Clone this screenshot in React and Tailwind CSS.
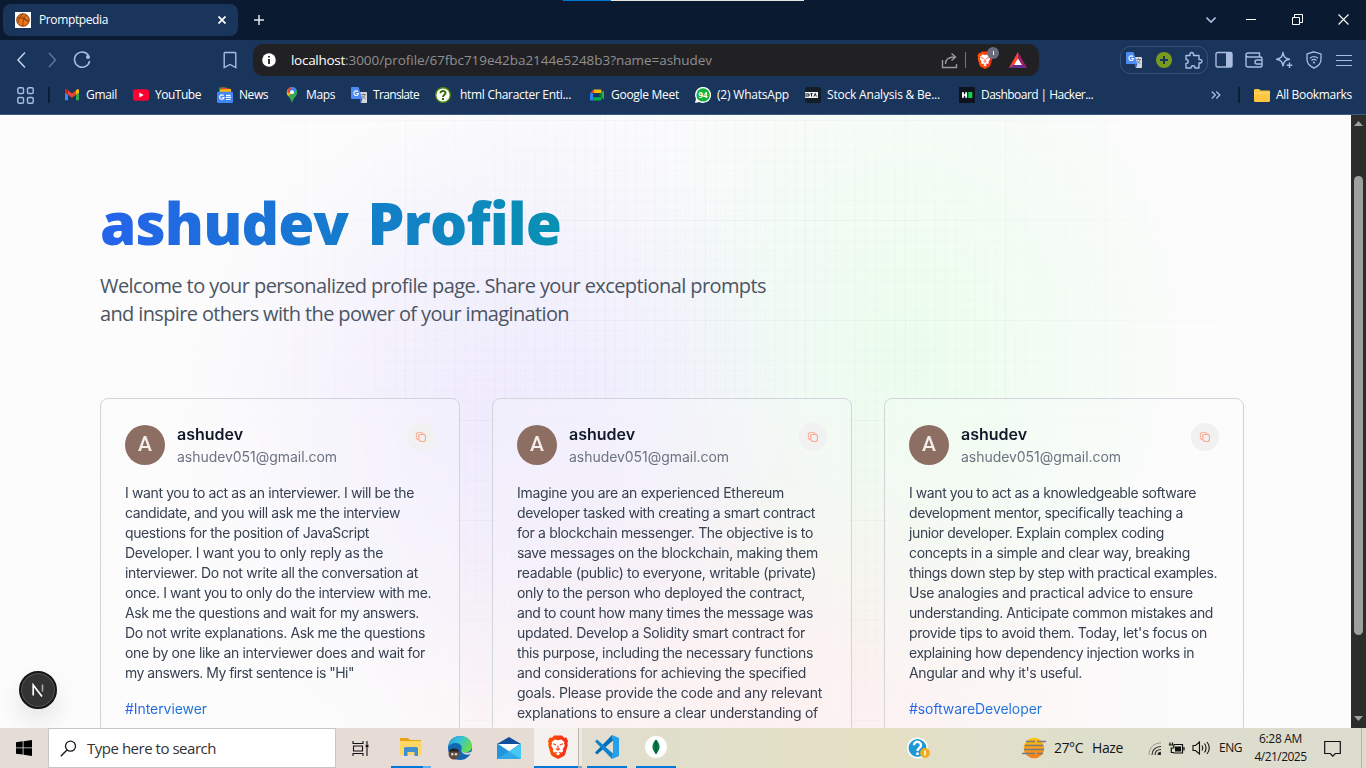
import { useLayoutEffect, useRef, useState } from "react";

// Single line of text whose tracking is adjusted so that it spans `w` pixels.
function Fit({ w, children, className = "" }) {
  const ref = useRef(null);
  const [spacing, setSpacing] = useState(0);
  useLayoutEffect(() => {
    const natural = ref.current.getBoundingClientRect().width;
    setSpacing((w - natural) / String(children).length);
  }, [w, children]);
  return (
    <span ref={ref} className={"inline-block shrink-0 whitespace-pre " + className} style={{ letterSpacing: spacing }}>
      {children}
    </span>
  );
}

function Svg({ s = 16, vb = "0 0 16 16", className = "", children }) {
  return (
    <svg width={s} height={s} viewBox={vb} fill="none" className={"shrink-0 " + className}>
      {children}
    </svg>
  );
}

function BraveIcon({ s, className }) {
  return (
    <Svg s={s} vb="0 0 24 24" className={className}>
      <defs>
        <linearGradient id="brave" x1="0" y1="0" x2="1" y2="0">
          <stop offset="0" stopColor="#ff5500" />
          <stop offset="1" stopColor="#f02a1c" />
        </linearGradient>
      </defs>
      <path d="M8 .5h8l2 2.200 2.300-.2L22 6l-.7 2.500.5 1.500-2.500 9c-.3 1-1 1.700-1.800 2.300L12 24l-5.500-2.700c-.8-.6-1.500-1.300-1.800-2.300L2.200 10l.5-1.500L2 6l1.700-3.500L6 2.700z" fill="url(#brave)" />
      <path d="M12 5.200l3.300-.7 3.200 2.800-.6 1.200 1 2-2.300 3.800.7 1.700-2 1.700-1.500-1-1.800 1.600-1.800-1.600-1.500 1-2-1.700.7-1.700L5.100 10.500l1-2-.6-1.200 3.200-2.800z" fill="#fff" />
      <path d="M12 17.200l2.400 1.300-2.400 2-2.400-2z" fill="#fff" />
      <path d="M7 8.800l3.200 1.200M17 8.800L13.800 10M12 10.500v3.200M10 13.500l2 1.500 2-1.500" stroke="#f8421d" strokeWidth="1.200" />
    </Svg>
  );
}

const TranslateIcon = () => (
  <Svg>
    <path d="M7 5h8a1 1 0 0 1 1 1v9.500a.6.600 0 0 1-.6.500H10z" fill="#d5d8dc" />
    <path d="M0 1a1 1 0 0 1 1-1h6.500l4 12H1a1 1 0 0 1-1-1z" fill="#4c8bf5" />
    <path d="M8.500 12h3L10 16z" fill="#3367d6" />
    <path d="M10.500 7.500h4.500M12.500 6.500v1M14 7.500c-.5 2-1.500 3-2.500 3.800M11.500 8.800c.7 1.500 1.700 2.300 3 3" stroke="#70757a" strokeWidth=".9" />
    <path d="M7 4.700A2.300 2.300 0 1 0 7.500 6.500H5.300" stroke="#fff" strokeWidth="1.100" />
  </Svg>
);
const GmailIcon = () => (
  <Svg>
    <path d="M1 4v9.300h3V7.500z" fill="#4285f4" />
    <path d="M15 4v9.300h-3V7.500z" fill="#34a853" />
    <path d="M1 3.500C1 2.500 2.300 2 3.200 2.700L8 6.400l4.800-3.700C13.700 2 15 2.500 15 3.500V5.500L8 10.700 1 5.500z" fill="#ea4335" />
    <path d="M12 3.300l.8-.6C13.700 2 15 2.500 15 3.500v2L12 7.700z" fill="#fbbc04" />
    <path d="M1 3.500C1 2.500 2.300 2 3.200 2.700l.8.600v4.400L1 5.500z" fill="#c5221f" />
  </Svg>
);
const YoutubeIcon = () => (
  <Svg>
    <rect y="2.300" width="16" height="11.400" rx="2.800" fill="#ff0033" />
    <path d="M6.300 5.600v4.800L10.700 8z" fill="#fff" />
  </Svg>
);
const NewsIcon = () => (
  <Svg>
    <path d="M2 .5h8v5H2z" fill="#0c9d58" />
    <path d="M4.500 0L14 2 13 6H4z" fill="#ea4335" />
    <path d="M3 2.500l11-.5v4H3z" fill="#fbbc04" />
    <rect y="4.800" width="16" height="11.200" rx="1" fill="#4285f4" />
    <path d="M6.600 8.700A2.200 2.200 0 1 0 7 10.500H5M9 8.300h4.500M9 10.400h5M9 12.500h4.500" stroke="#fff" strokeWidth="1.200" />
  </Svg>
);
const MapsIcon = () => (
  <Svg>
    <path d="M8 0C5 0 2.800 2.300 2.800 5.200 2.800 9 6.700 10.500 8 16c1.300-5.500 5.200-7 5.200-10.800C13.200 2.300 11 0 8 0z" fill="#34a853" />
    <path d="M3.900 2L8 5.200 4.200 9.200C2.500 7 2.200 4 3.900 2z" fill="#fbbc04" />
    <path d="M3.900 2C5 .7 6.500 0 8 0l-.5 3.500-3 3-1.500-2z" fill="#ea4335" />
    <path d="M8 0c2 0 3.700 1 4.500 2.500L8 7.500 5.500 4z" fill="#4285f4" />
    <circle cx="8" cy="5.200" r="1.900" fill="#fff" />
  </Svg>
);
const HelpBookmark = () => (
  <Svg>
    <circle cx="8" cy="8" r="7.300" fill="#fff" stroke="#4b8a08" strokeWidth="1.400" />
    <path d="M5.500 6.300C5.500 3 10.700 3.300 10.500 6.200 10.400 7.700 8 8 8 10" stroke="#2f6a00" strokeWidth="1.900" />
    <rect x="7" y="11" width="2" height="2" fill="#2f6a00" />
  </Svg>
);
const MeetIcon = () => (
  <Svg>
    <path d="M4.500 2.500h7a1 1 0 0 1 1 1V6H4.500z" fill="#fbbc04" />
    <path d="M1 6.200L4.500 2.500v3.700z" fill="#ea4335" />
    <path d="M1 6.200h3.500v7.300H2a1 1 0 0 1-1-1z" fill="#2684fc" />
    <path d="M4.500 10h8v2.500a1 1 0 0 1-1 1h-7z" fill="#00ac47" />
    <path d="M12.500 5.500L15 3.500v9l-2.500-2z" fill="#34a853" />
    <path d="M9.500 8l3-2.500v5z" fill="#00832d" />
    <path d="M4.500 6h5v4.200h-5z" fill="#1a3560" />
  </Svg>
);
const WhatsAppIcon = () => (
  <Svg>
    <path d="M0 16l1-4.300A8 8 0 1 1 4.300 15z" fill="#fff" />
    <circle cx="8.100" cy="7.900" r="6.700" fill="#11b13c" />
    <text x="8" y="10.900" fontSize="8" fontWeight="700" textAnchor="middle" fill="#fff" fontFamily="Open Sans, sans-serif">94</text>
  </Svg>
);
const StockIcon = () => (
  <Svg>
    <rect width="16" height="16" rx="2.500" fill="#151d29" />
    <path d="M0 5h13v6H0z" fill="#f2f2f2" />
    <path d="M0 7h4v2H0M5.500 6.500h2M6.500 6.500V9.500M9 9.500l1.200-3 1.200 3" stroke="#151d29" strokeWidth="1" />
  </Svg>
);
const HackerIcon = () => (
  <Svg>
    <rect width="16" height="16" fill="#0e141e" />
    <path d="M3 5.200h1.900v2h1.300v-2h1.900v5.600H6.200v-2H4.900v2H3z" fill="#fff" />
    <rect x="9.300" y="5" width="4" height="6" fill="#05d64d" />
  </Svg>
);

const BOOKMARKS = [
  { icon: <GmailIcon />, text: "Gmail", gap: "ml-0", pad: "ml-1.5", w: 31 },
  { icon: <YoutubeIcon />, text: "YouTube", gap: "ml-4", pad: "ml-1.5", w: 46 },
  { icon: <NewsIcon />, text: "News", gap: "ml-4", pad: "ml-[6px]", w: 29 },
  { icon: <MapsIcon />, text: "Maps", gap: "ml-4", pad: "ml-1.5", w: 29 },
  { icon: <TranslateIcon />, text: "Translate", gap: "ml-4", pad: "ml-1.5", w: 46 },
  { icon: <HelpBookmark />, text: "html Character Enti...", gap: "ml-4", pad: "ml-[9px]", w: 111 },
  { icon: <MeetIcon />, text: "Google Meet", gap: "ml-[18px]", pad: "ml-1.5", w: 68 },
  { icon: <WhatsAppIcon />, text: "(2) WhatsApp", gap: "ml-4", pad: "ml-1.5", w: 72 },
  { icon: <StockIcon />, text: "Stock Analysis & Be...", gap: "ml-4", pad: "ml-1.5", w: 113 },
  { icon: <HackerIcon />, text: "Dashboard | Hacker...", gap: "ml-[19px]", pad: "ml-1.5", w: 112 },
];

function TabStrip() {
  return (
    <div className="flex h-10 items-start bg-[#0a1a30]">
      <div className="ml-[3px] mt-1 flex h-8 w-[235px] items-center rounded-lg bg-[#1a355c] pl-3">
        <Svg>
          <rect width="16" height="16" fill="#fff" />
          <circle cx="8" cy="8" r="6.300" fill="#ee7416" stroke="#70350f" strokeWidth=".9" />
          <path d="M2.500 5.500c4 0 8.500 2 11 5M5.500 2.300c2 3 4.500 5.500 8.300 6.500M8 14C7.500 9.500 8.700 5.500 11.500 3M3 11c0-3 2-6.500 5-9" stroke="#70350f" strokeWidth=".7" />
        </Svg>
        <Fit w={69} className="ml-2 text-xs">Promptpedia</Fit>
        <Svg s={8} vb="0 0 8 8" className="ml-auto mr-3">
          <path d="M.5.5l7 7M7.500.5l-7 7" stroke="#fff" strokeWidth="1.700" />
        </Svg>
      </div>
      <Svg s={10} vb="0 0 10 10" className="ml-4 mt-[15px]">
        <path d="M5 0v10M0 5h10" stroke="#e4e8ef" strokeWidth="1.500" />
      </Svg>
      <div className="ml-[299px] flex h-px w-[241px] shrink-0">
        <div className="w-12 bg-[#0078d7]" />
        <div className="flex-1 bg-[#e6e3e0]" />
      </div>
      <Svg s={10} vb="0 0 10 10" className="ml-[402px] mt-[15px]">
        <path d="M.5 2.500L5 7l4.500-4.500" stroke="#a8bde0" strokeWidth="1.600" />
      </Svg>
      <div className="ml-[30px] mt-[19px] h-px w-2.5 bg-white" />
      <Svg s={11} vb="0 0 11 11" className="ml-9 mt-[14px]">
        <path d="M.5 3.500h7v7h-7zM2.500 3.500v-3h8v8H7.500" stroke="#fff" />
      </Svg>
      <Svg s={11} vb="0 0 11 11" className="ml-[35px] mt-[14px]">
        <path d="M.5.5l10 10M10.500.5l-10 10" stroke="#fff" strokeWidth="1.100" />
      </Svg>
    </div>
  );
}

function Toolbar() {
  return (
    <div className="flex h-10 items-center bg-[#1a355c]">
      <Svg s={18} vb="0 0 18 18" className="ml-[13px]">
        <path d="M12 1.500L5 9l7 7.500" stroke="#c3d2ec" strokeWidth="1.500" />
      </Svg>
      <Svg s={18} vb="0 0 18 18" className="ml-3">
        <path d="M6 2l6.500 7L6 16" stroke="#5c7499" strokeWidth="1.500" />
      </Svg>
      <Svg s={18} vb="0 0 18 18" className="ml-3">
        <path d="M15.500 4.500A7.600 7.600 0 1 0 16.600 10" stroke="#a8bde0" strokeWidth="1.500" />
        <circle cx="15" cy="6" r="2" fill="#a8bde0" />
      </Svg>
      <Svg s={18} vb="0 0 18 18" className="ml-[130px]">
        <path d="M4 1.500h10a.8.800 0 0 1 .8.800V16.500L9 13.500l-5.800 3V2.300a.8.800 0 0 1 .8-.8z" stroke="#a8bde0" strokeWidth="1.400" />
      </Svg>
      <div className="ml-[14px] flex h-8 w-[786px] items-center rounded-[10px] bg-[#212124]">
        <Svg s={14} vb="0 0 14 14" className="ml-[9px]">
          <circle cx="7" cy="7" r="6.800" fill="#fff" />
          <path d="M6 3h2v1.500H6zM6 6h2v5H6z" fill="#333" />
        </Svg>
        <div className="ml-[15px] flex text-[13.500px] text-[#8f8f91]">
          <Fit w={54} className="text-white">localhost</Fit>
          <Fit w={367}>:3000/profile/67fbc719e42ba2144e5248b3?name=ashudev</Fit>
        </div>
        <Svg s={17} vb="0 0 17 17" className="ml-auto">
          <path d="M1.500 8v7.500h14V12M4.500 12c0-5 3-7 9-7M10.500 1.500L14.500 5l-4 3.500" stroke="#9a9a9d" strokeWidth="1.400" />
        </Svg>
        <div className="ml-[7px] h-4 w-px bg-[#77777a]" />
        <div className="relative ml-2.5 flex h-[18px] w-[22px] items-center">
          <BraveIcon s={18} />
          <div className="absolute -top-1 right-[-1px] flex h-3 w-3 items-center justify-center rounded-full bg-[#6a6c7d]">
            <div className="h-1 w-px bg-white" />
          </div>
        </div>
        <Svg s={18} vb="0 0 18 18" className="ml-[11px] mr-3">
          <path d="M9 1L0 17h18z" fill="#9e1f63" />
          <path d="M9 1L0 17l9-6.500z" fill="#ff4724" />
          <path d="M0 17h18l-4.700-3H5z" fill="#662d91" />
          <path d="M9 7.500L5 14h8z" fill="#fff" />
        </Svg>
      </div>
      <div className="ml-[81px] flex h-7 w-[88px] items-center rounded-[10px] border border-[#34507c] pl-[5px]">
        <TranslateIcon />
        <Svg className="ml-[14px]">
          <circle cx="8" cy="8" r="8" fill="#7a9a1e" />
          <path d="M8 4v8M4 8h8" stroke="#1a355c" strokeWidth="2" />
        </Svg>
        <Svg s={19} vb="0 0 19 19" className="ml-3">
          <path d="M2 4.500h4c-1-4 4.500-4 3.500 0h5.500v4c4-.5 4 4 0 3.500v5h-4c0-3-4-3-4 0H2v-4.500c3 0 3-4 0-4z" stroke="#a8bde0" strokeWidth="1.400" strokeLinejoin="round" />
        </Svg>
      </div>
      <Svg s={18} vb="0 0 18 18" className="ml-[7px]">
        <rect x="1" y="1.500" width="16" height="14.500" rx="1.500" stroke="#a8bde0" strokeWidth="1.400" />
        <path d="M11 1.500h6V16h-6z" fill="#a8bde0" />
      </Svg>
      <Svg s={18} vb="0 0 18 18" className="ml-3">
        <path d="M3 6h12.500a1.500 1.500 0 0 1 1.500 1.500v7a1.500 1.500 0 0 1-1.500 1.500H3a2 2 0 0 1-2-2V4a2 2 0 0 1 2-2h11.500v4M1.200 5C2 6 3 6 3 6M17 9h-5a2 2 0 0 0 0 4h5" stroke="#a8bde0" strokeWidth="1.400" />
      </Svg>
      <Svg s={18} vb="0 0 18 18" className="ml-3">
        <path d="M8 1.500c.8 4.500 2 6 6.500 6.700-4.500.8-5.700 2.300-6.500 6.800-.8-4.500-2-6-6.500-6.800C6 7.500 7.200 6 8 1.500zM14.500 11.500v5.500M11.700 14.300h5.600" stroke="#a8bde0" strokeWidth="1.400" strokeLinejoin="round" />
      </Svg>
      <Svg s={18} vb="0 0 18 18" className="ml-3">
        <path d="M9 .8l7 2.200v5.500c0 4-3 6.700-7 8.700-4-2-7-4.700-7-8.700V3z" stroke="#a8bde0" strokeWidth="1.300" />
        <path d="M5 7.300c2.500-2 5.500-2 8 0M6.500 9.500c1.500-1.300 3.500-1.300 5 0" stroke="#a8bde0" strokeWidth="1.300" />
        <circle cx="9" cy="11.500" r="1.100" fill="#a8bde0" />
      </Svg>
      <div className="ml-[13px] flex w-4 flex-col gap-1">
        <div className="h-px bg-[#a8bde0]" />
        <div className="h-px bg-[#a8bde0]" />
        <div className="h-px bg-[#a8bde0]" />
      </div>
    </div>
  );
}

function BookmarksBar() {
  return (
    <div className="flex h-[35px] items-center border-b border-[#3b5b86] bg-[#1a355c] pb-1 text-xs">
      <Svg s={17} vb="0 0 17 17" className="ml-[17px]">
        <rect x=".8" y=".8" width="5.700" height="5.700" rx="1.300" stroke="#a8bde0" strokeWidth="1.400" />
        <rect x="10.500" y=".8" width="5.700" height="5.700" rx="1.300" stroke="#a8bde0" strokeWidth="1.400" />
        <rect x=".8" y="10.500" width="5.700" height="5.700" rx="1.300" stroke="#a8bde0" strokeWidth="1.400" />
        <rect x="10.500" y="10.500" width="5.700" height="5.700" rx="1.300" stroke="#a8bde0" strokeWidth="1.400" />
      </Svg>
      <div className="ml-3.5 mr-3.5 h-4 w-0.5 bg-[#0c1d38]" />
      {BOOKMARKS.map((b) => (
        <div key={b.text} className={"flex shrink-0 items-center " + b.gap}>
          {b.icon}
          <Fit w={b.w} className={b.pad}>{b.text}</Fit>
        </div>
      ))}
      <Svg s={10} vb="0 0 10 10" className="ml-auto">
        <path d="M.8 1.500L4.300 5 .8 8.500M5.300 1.500L8.800 5 5.300 8.500" stroke="#a8bde0" strokeWidth="1.300" />
      </Svg>
      <div className="ml-[17px] h-4 w-0.5 bg-[#0c1d38]" />
      <Svg className="ml-[14px]">
        <path d="M0 3.500C0 2.700.5 2 1.300 2H5l1.500 1.500H15a1 1 0 0 1 1 1v9.200c0 .7-.5 1.200-1.200 1.200H1.200C.5 14.900 0 14.400 0 13.700z" fill="#fcc73c" />
        <path d="M0 5.500h16v1H0z" fill="#ffe08a" />
      </Svg>
      <Fit w={76} className="ml-1.5 mr-[14px]">All Bookmarks</Fit>
    </div>
  );
}

const CARDS = [
  {
    lines: [
      ["I want you to act as an interviewer. I will be the", 289],
      ["candidate, and you will ask me the interview", 275],
      ["questions for the position of JavaScript", 244],
      ["Developer. I want you to only reply as the", 258],
      ["interviewer. Do not write all the conversation at", 293],
      ["once. I want you to only do the interview with me.", 306],
      ["Ask me the questions and wait for my answers.", 294],
      ["Do not write explanations. Ask me the questions", 300],
      ["one by one like an interviewer does and wait for", 300],
      ["my answers. My first sentence is \"Hi\"", 229],
    ],
    tag: ["#Interviewer", 82],
  },
  {
    lines: [
      ["Imagine you are an experienced Ethereum", 267],
      ["developer tasked with creating a smart contract", 298],
      ["for a blockchain messenger. The objective is to", 296],
      ["save messages on the blockchain, making them", 301],
      ["readable (public) to everyone, writable (private)", 299],
      ["only to the person who deployed the contract,", 288],
      ["and to count how many times the message was", 296],
      ["updated. Develop a Solidity smart contract for", 288],
      ["this purpose, including the necessary functions", 296],
      ["and considerations for achieving the specified", 289],
      ["goals. Please provide the code and any relevant", 305],
      ["explanations to ensure a clear understanding of", 301],
    ],
  },
  {
    lines: [
      ["I want you to act as a knowledgeable software", 287],
      ["development mentor, specifically teaching a", 274],
      ["junior developer. Explain complex coding", 255],
      ["concepts in a simple and clear way, breaking", 281],
      ["things down step by step with practical examples.", 308],
      ["Use analogies and practical advice to ensure", 284],
      ["understanding. Anticipate common mistakes and", 304],
      ["provide tips to avoid them. Today, let's focus on", 298],
      ["explaining how dependency injection works in", 285],
      ["Angular and why it's useful.", 173],
    ],
    tag: ["#softwareDeveloper", 133],
  },
];

function PromptCard({ lines, tag }) {
  return (
    <article className="h-[420px] w-[360px] shrink-0 rounded-lg border border-[#d1d5db] bg-white/20 p-6 font-['Inter',sans-serif] backdrop-blur-[10px]">
      <div className="flex items-start">
        <div className="mt-0.5 flex size-10 items-center justify-center rounded-full bg-[#8d6e63] font-['Roboto',sans-serif] text-[21px] font-medium text-[#f5efec]">A</div>
        <div className="-mt-px ml-3 flex flex-col">
          <Fit w={66} className="self-start text-base leading-6 font-semibold text-[#111827]">ashudev</Fit>
          <Fit w={160} className="self-start text-sm leading-[22px] text-[#6b7280]">ashudev051@gmail.com</Fit>
        </div>
        <div className="ml-auto flex size-7 items-center justify-center rounded-full bg-[#f1f1f2]">
          <Svg s={12} vb="0 0 12 12">
            <path d="M3.800 8.500H2.500l-1-1v-5l1-1h4.500l1 1v1" stroke="#fbb5a2" strokeWidth="1.200" />
            <path d="M4.600 3.500h4.800l1 1v5l-1 1H5.600l-1.800-1.500v-4.500z" stroke="#fba88f" strokeWidth="1.200" />
          </Svg>
        </div>
      </div>
      <div className="mt-[15px] flex flex-col items-start text-sm leading-5 text-[#374151]">
        {lines.map(([t, w]) => (
          <Fit key={t} w={w} className="h-5">{t}</Fit>
        ))}
      </div>
      {tag && (
        <div className="mt-4 text-sm leading-5">
          <Fit w={tag[1]} className="bg-linear-to-r/srgb from-[#2563eb] to-[#1a76d2] bg-clip-text text-transparent">{tag[0]}</Fit>
        </div>
      )}
    </article>
  );
}

function Page() {
  return (
    <main className="relative flex-1 overflow-hidden bg-[#fcfcfc] bg-[radial-gradient(ellipse_310px_330px_at_490px_310px,rgba(226,213,255,.4),rgba(226,213,255,.22)_50%,transparent),radial-gradient(ellipse_300px_360px_at_620px_270px,rgba(226,234,255,.25),transparent),radial-gradient(ellipse_290px_360px_at_910px_240px,rgba(212,255,216,.42),rgba(212,255,216,.22)_50%,transparent),radial-gradient(ellipse_420px_330px_at_760px_600px,rgba(255,214,214,.38),rgba(255,214,214,.22)_50%,transparent)]">
      <div className="absolute inset-0 bg-[linear-gradient(to_right,rgba(60,60,90,.02)_1px,transparent_1px),linear-gradient(to_bottom,rgba(60,60,90,.02)_1px,transparent_1px),linear-gradient(to_right,rgba(60,60,90,.014)_1px,transparent_1px),linear-gradient(to_bottom,rgba(60,60,90,.014)_1px,transparent_1px)] mask-[radial-gradient(ellipse_680px_600px_at_700px_280px,black_40%,transparent)] bg-size-[100px_100px,100px_100px,10px_10px,10px_10px] bg-position-[5px_5px,5px_5px,5px_5px,5px_5px]" />
      <section className="relative pt-[71px] pl-[100px]">
        <h1 className="h-[72px] leading-[72px]">
          <Fit w={461} className="bg-linear-to-r/srgb from-[#2563eb] to-[#0891b2] bg-clip-text text-[58.500px] font-extrabold text-transparent [word-spacing:5px]">ashudev Profile</Fit>
        </h1>
        <div className="mt-[14px] flex flex-col items-start text-xl leading-7 text-[#4b5563]">
          <Fit w={666}>Welcome to your personalized profile page. Share your exceptional prompts</Fit>
          <Fit w={469}>and inspire others with the power of your imagination</Fit>
        </div>
        <div className="mt-[70px] flex gap-8">
          {CARDS.map((c, i) => (
            <PromptCard key={i} {...c} />
          ))}
        </div>
      </section>
      <div className="absolute top-[556px] left-[19px] flex size-[38px] items-center justify-center rounded-full border-2 border-[#151515] bg-[#333] shadow-[0_12px_24px_rgba(0,0,0,.1)] ring-1 ring-[#555] ring-inset">
        <Svg s={14} vb="0 0 14 14">
          <path d="M2.200 12.500V2L11 13.500" stroke="#fff" strokeWidth="1.700" />
          <path d="M11.500 1.500v7" stroke="#aaa" strokeWidth="1.600" />
        </Svg>
      </div>
    </main>
  );
}

function Scrollbar() {
  return (
    <div className="flex w-[15px] flex-col items-center bg-[#2c2c2c]">
      <Svg s={9} vb="0 0 9 9" className="mt-1">
        <path d="M0 7l4.500-5L9 7z" fill="#9f9f9f" />
      </Svg>
      <div className="mt-12 h-[459px] w-[9px] rounded-full bg-[#9f9f9f]" />
      <Svg s={9} vb="0 0 9 9" className="mt-auto mb-[5px]">
        <path d="M0 2l4.500 5L9 2z" fill="#9f9f9f" />
      </Svg>
    </div>
  );
}

function Taskbar() {
  return (
    <footer className="flex h-10 items-center bg-[linear-gradient(to_right,#e6dcd7,#e6dcd5_36%,#e0dfca_50%,#e5e0c4_64%,#dfdfcc_76%,#dcdccf)] text-[#141414]">
      <Svg className="ml-4">
        <path d="M0 2.300l6.700-1v6.200H0zM7.500 1.200L16 0v7.500H7.500zM0 8.300h6.700v6.300L0 13.700zM7.500 8.300H16V16l-8.500-1.200z" fill="#000" />
      </Svg>
      <div className="ml-4 flex h-10 w-[288px] shrink-0 items-center border border-[#c6c6c8] bg-white">
        <Svg s={17} vb="0 0 17 17" className="ml-[11px]">
          <circle cx="10.500" cy="6.200" r="5" stroke="#1a1a1a" strokeWidth="1.300" />
          <path d="M7 10L.8 16.200" stroke="#1a1a1a" strokeWidth="1.400" />
        </Svg>
        <Fit w={129} className="ml-2.5 text-[15px] text-[#333]">Type here to search</Fit>
      </div>
      <Svg s={17} vb="0 0 17 17" className="ml-4">
        <path d="M1 1v2.500h10V1M1 16v-2.500h10V16M1.500 6h9v5h-9zM15 1v3M15 8v8" stroke="#111" strokeWidth="1.100" />
        <path d="M13.700 4.500h2.700v3h-2.700z" fill="#111" />
      </Svg>
      <div className="ml-[22px] flex h-10 w-10 flex-col justify-end">
        <Svg s={22} vb="0 0 22 22" className="mb-[8px] ml-[9px]">
          <path d="M0 2h8l2 2h11v15H0z" fill="#e6a516" />
          <path d="M0 5h21.500v14H0z" fill="#ffd765" />
          <path d="M4 20v-7.500A1.500 1.500 0 0 1 5.500 11h11a1.500 1.500 0 0 1 1.500 1.500V20h-3.500v-4h-7v4z" fill="#3f8fd2" />
        </Svg>
        <div className="flex h-0.5">
          <div className="w-8 bg-[#0078d7]" />
          <div className="flex-1 bg-[#69aee8]" />
        </div>
      </div>
      <Svg s={24} vb="0 0 24 24" className="ml-[17px]">
        <defs>
          <linearGradient id="edgeTop" x1="0" y1="0" x2="1" y2=".4">
            <stop offset="0" stopColor="#2a9be0" />
            <stop offset=".5" stopColor="#35c1d8" />
            <stop offset="1" stopColor="#66dc50" />
          </linearGradient>
        </defs>
        <circle cx="12" cy="12" r="12" fill="#1267b4" />
        <path d="M0 11C1 3.500 6 0 12 0c8 0 12 5 12 10 0 4-3 6.500-7 6.500-3 0-4.500-1.200-3.500-3C14.500 10 12 7 8 7c-4 0-7 2-8 4z" fill="url(#edgeTop)" />
        <path d="M13.500 13.500c-.5 3 4 4.500 10.500 2.300v1.500c-4 2.500-10.500 1.700-10.500-3.800z" fill="#e4dad3" />
        <circle cx="6" cy="18" r="5.500" fill="#5b4a40" />
        <path d="M.5 15.500c2-4 9-4 11 0z" fill="#222" />
        <circle cx="4.300" cy="18.300" r="1.300" fill="#d9d3cf" />
        <circle cx="8" cy="18.300" r="1.300" fill="#d9d3cf" />
      </Svg>
      <Svg s={24} vb="0 0 24 24" className="ml-[25px]">
        <path d="M0 8l12-7 12 7z" fill="#0f4f9c" />
        <path d="M0 8h24v15H0z" fill="#32a9e6" />
        <path d="M1.500 8h21L12 15.500z" fill="#fff" />
        <path d="M0 8l12 7.500L0 23z" fill="#2395dc" />
        <path d="M24 23L12 15.500 24 8z" fill="#45c8f5" />
      </Svg>
      <div className="ml-[13px] flex h-10 w-[45px] flex-col justify-end border-r border-[#b9b4ae] bg-[#f5f1ee]">
        <BraveIcon s={24} className="mb-[7px] ml-3" />
        <div className="h-0.5 bg-[#0078d7]" />
      </div>
      <div className="flex h-10 w-[3px] items-end bg-[#eee8e4]"><div className="h-0.5 w-full bg-[#69aee8]" /></div>
      <div className="ml-[5px] flex h-10 w-10 flex-col justify-end">
        <Svg s={24} vb="0 0 24 24" className="mb-[7px] ml-2">
          <path d="M18 5.500L2 19.500 0 17.500 17 0z" fill="#0070b8" />
          <path d="M18 18.500L2 4.500 0 6.500 17 24z" fill="#1085cf" />
          <path d="M17 0l7 3v18l-7 3 1-5.500v-13z" fill="#23a0ee" />
        </Svg>
        <div className="h-0.5 bg-[#0078d7]" />
      </div>
      <div className="ml-[9px] flex h-10 w-10 flex-col justify-end">
        <Svg s={22} vb="0 0 22 22" className="mb-[8px] ml-[9px]">
          <circle cx="11" cy="11" r="11" fill="#fff" />
          <path d="M11 3.500c5 5 4.500 10 0 14.500-4.500-4.500-5-9.500 0-14.500z" fill="#0a7a4b" />
          <path d="M11 4v14" stroke="#044a2e" strokeWidth="1" />
        </Svg>
        <div className="h-0.5 bg-[#0078d7]" />
      </div>
      <Svg s={23} vb="0 0 23 23" className="ml-[231px]">
        <circle cx="10.500" cy="11" r="9.700" fill="#1b98d5" stroke="#fff" strokeWidth="1.500" />
        <path d="M7 8.200C7 3.500 14.200 4 14 8.300 13.800 10.800 10.500 11 10.500 14" stroke="#fff" strokeWidth="2.500" />
        <circle cx="10.500" cy="16.800" r="1.500" fill="#fff" />
        <circle cx="18" cy="16" r="4.900" fill="#f3ab1e" />
        <path d="M18 13.500v5" stroke="#fff" strokeWidth="1.500" />
      </Svg>
      <Svg s={24} vb="0 0 24 24" className="ml-[92px]">
        <defs>
          <linearGradient id="haze" x1="0" y1="0" x2="0" y2="1">
            <stop offset="0" stopColor="#fbc50c" />
            <stop offset="1" stopColor="#f47b20" />
          </linearGradient>
        </defs>
        <circle cx="12" cy="12" r="10.300" fill="url(#haze)" />
        <path d="M4 5.500h9M15 5.500h9M3 9.500h18M2 13.500h20M0 17.500h13M15 17.500h6" stroke="#777a80" strokeWidth="1.700" />
      </Svg>
      <Fit w={29} className="ml-2 text-sm">27°C</Fit>
      <Fit w={31} className="ml-[9px] text-sm">Haze</Fit>
      <Svg s={13} vb="0 0 13 13" className="ml-[25px]">
        <path d="M1 13C1 6 5.500 1 13 1" stroke="#999" strokeWidth="1" />
        <path d="M4 13c0-5 3.500-8.500 9-8.500M7 13c0-3.500 2.500-5.500 6-5.500M10 13c0-2 1-2.800 3-2.800" stroke="#222" strokeWidth="1.100" />
        <circle cx="11.800" cy="12" r="1.200" fill="#111" />
      </Svg>
      <Svg s={17} vb="0 0 17 17" className="ml-[7px]">
        <path d="M6 4.500H14.500v8.500H5.500M16 7v3.500M2 2.500v2.500M4.500 2.500v2.500M.8 5h5v3H3.300v4.500H6" stroke="#111" strokeWidth="1.200" />
        <path d="M7 6.500h6v5H7z" fill="#111" />
      </Svg>
      <Svg s={18} vb="0 0 18 18" className="ml-[7px]">
        <path d="M1 6.500h2.500L7.500 3v12l-4-3.500H1zM10 6.500c1 1.500 1 3.500 0 5M12.500 4.500c2 2.500 2 6.500 0 9M15 3c3 3.500 3 8.500 0 12" stroke="#111" strokeWidth="1.100" />
      </Svg>
      <Fit w={23} className="ml-[9px] text-xs">ENG</Fit>
      <div className="ml-3 flex w-[53px] flex-col items-center text-xs leading-[18px]">
        <Fit w={43}>6:28 AM</Fit>
        <Fit w={52}>4/21/2025</Fit>
      </div>
      <Svg s={17} vb="0 0 17 17" className="ml-[17px]">
        <path d="M.7 1.500h15.600v12h-5l-2.500 2.700-2.500-2.700H.7z" stroke="#111" strokeWidth="1.200" />
      </Svg>
      <div className="mr-[4px] ml-auto h-10 w-px bg-[#b5b5aa]" />
    </footer>
  );
}

export default function App() {
  return (
    <div className="flex h-[768px] w-[1366px] flex-col overflow-hidden bg-[#1a355c] font-['Open_Sans',sans-serif] text-white">
      <TabStrip />
      <Toolbar />
      <BookmarksBar />
      <div className="flex min-h-0 flex-1">
        <Page />
        <Scrollbar />
      </div>
      <Taskbar />
    </div>
  );
}
